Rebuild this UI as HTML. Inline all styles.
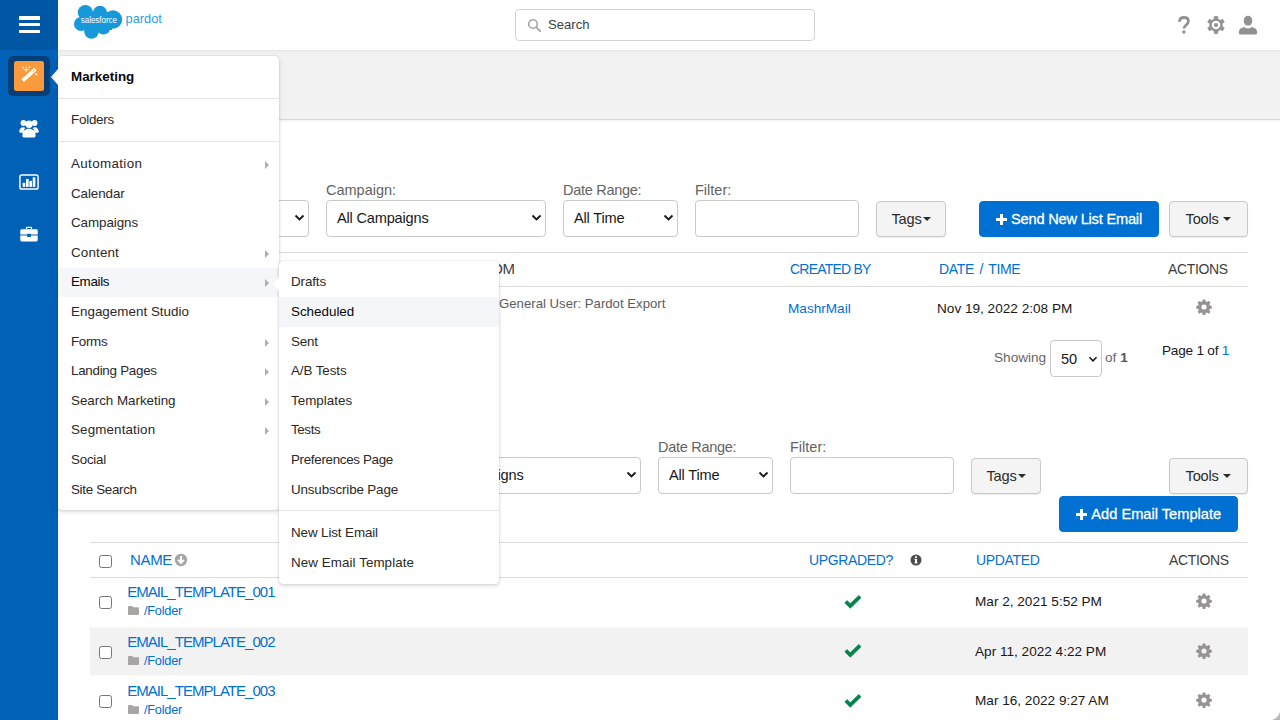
<!DOCTYPE html>
<html>
<head>
<meta charset="utf-8">
<title>Pardot - Emails</title>
<style>
*{box-sizing:border-box;margin:0;padding:0}
html,body{width:1280px;height:720px;overflow:hidden;background:#fff;font-family:"Liberation Sans",sans-serif;color:#181818}
.abs{position:absolute}
#side{position:absolute;left:0;top:0;width:58px;height:720px;background:#0061b6}
#sidetop{position:absolute;left:0;top:0;width:58px;height:50px;background:#0058a5}
.hb{position:absolute;left:19px;width:21px;height:3.5px;background:#fff;border-radius:.5px}
#topbar{position:absolute;left:58px;top:0;width:1222px;height:50px;background:#fff}
#band{position:absolute;left:58px;top:50px;width:1222px;height:70px;background:linear-gradient(#e4e3e3 0,#eeeded 1.500px,#f3f2f2 4px);border-bottom:1px solid #d9d8d8;box-shadow:0 1px 2px rgba(0,0,0,.07)}
#search{position:absolute;left:515px;top:9px;width:300px;height:32px;border:1px solid #d4d4d4;border-radius:4px;background:#fff}
#search span{position:absolute;left:32px;top:7px;font-size:13.1px;color:#3e3e3c}
.lbl{position:absolute;font-size:14.5px;color:#636363;white-space:nowrap;letter-spacing:0;margin-top:1px}
.sel{position:absolute;height:37px;border:1px solid #c9c9c9;border-radius:4px;background:#fff;font-size:14.6px;color:#181818;line-height:34px;padding-left:10px;white-space:nowrap;letter-spacing:-.2px}
.sel svg{position:absolute;right:3.300px;top:12.800px}
.inp{position:absolute;height:37px;border:1px solid #c9c9c9;border-radius:4px;background:#fff}
.btn{position:absolute;height:36px;border:1px solid #c9c9c9;border-radius:4px;background:#f4f4f4;font-size:14.6px;color:#2b2b2b;line-height:34px;text-align:center;white-space:nowrap;box-shadow:0 1px 1px rgba(0,0,0,.08);letter-spacing:-.2px}
.btn.blue{background:#0070d2;border-color:#0070d2;color:#fff;box-shadow:none;-webkit-text-stroke:.3px #fff;letter-spacing:.02px}
.caret{display:inline-block;width:0;height:0;border-left:4px solid transparent;border-right:4px solid transparent;border-top:4px solid #2b2b2b;vertical-align:middle;margin-left:1px;position:relative;top:-1px}
.hline{position:absolute;left:90px;width:1158px;height:1px;background:#dddbda}
.th{position:absolute;font-size:14px;color:#0070d2;white-space:nowrap;letter-spacing:-.35px}
.th.dk{color:#3e3e3c}
.td{position:absolute;font-size:13.6px;color:#181818;white-space:nowrap;letter-spacing:0;margin-top:1px}
.lnk{color:#0070d2}
.r1{font-size:15px !important;letter-spacing:-.97px !important;margin-top:0 !important}
.r2{font-size:12.8px !important;letter-spacing:-.25px !important;margin-top:.5px !important}
.rowbg{position:absolute;left:90px;width:1158px;background:#f3f2f2}
.cb{position:absolute;margin-top:1px;left:99px;width:13px;height:13px;border:1px solid #767676;border-radius:2.5px;background:#fff}
.gear{position:absolute;width:16px;height:16px}
.menu{position:absolute;background:#fff;border-radius:4px;box-shadow:0 2px 4px rgba(0,0,0,.14),0 0 1.500px rgba(0,0,0,.22)}
.mi{position:absolute;left:0;width:100%;height:30px;font-size:13.4px;color:#2b2826;line-height:30px;padding-left:13px;padding-top:1px;white-space:nowrap}
.mi.hl{background:#f4f6f9;color:#080707}
.mi i{position:absolute;right:10px;top:12.500px;width:0;height:0;border-top:4px solid transparent;border-bottom:4px solid transparent;border-left:4px solid #b0adab}
.mdiv{position:absolute;left:0;width:100%;height:1px;background:#e5e5e5}
</style>
</head>
<body>
<!-- top bar -->
<div id="topbar"></div>
<div id="band"></div>
<div id="search">
<svg class="abs" style="left:11px;top:8px" width="15" height="15" viewBox="0 0 15 15"><circle cx="6" cy="6" r="4.3" fill="none" stroke="#a5a5a5" stroke-width="1.6"/><path d="M9.2 9.2 L13.2 13.2" stroke="#a5a5a5" stroke-width="1.8" stroke-linecap="round"/></svg>
<span>Search</span></div>

<!-- logo -->
<svg class="abs" style="left:70px;top:0" width="100" height="44" viewBox="0 0 100 44">
<g fill="#1798d9">
<circle cx="15.300" cy="12.600" r="7.600"/><circle cx="30" cy="12.800" r="7"/><circle cx="43" cy="19.500" r="9.200"/>
<circle cx="11" cy="24" r="7"/><circle cx="21.500" cy="31.500" r="7.300"/><circle cx="33.500" cy="27.500" r="7"/>
<rect x="12" y="12" width="30" height="18"/>
</g>
<text x="10.800" y="22.600" style="font-family:'Liberation Sans',sans-serif" font-size="8.400" fill="#fff" textLength="36.200" lengthAdjust="spacingAndGlyphs">salesforce</text>
<text x="55.600" y="23" style="font-family:'Liberation Sans',sans-serif" font-size="13.500" fill="#2a9fdc" textLength="36.200" lengthAdjust="spacingAndGlyphs">pardot</text>
</svg>

<!-- top-right icons -->
<svg class="abs" style="left:1176px;top:14px" width="16" height="22" viewBox="0 0 16 22"><path d="M3.500 7.800C3.500 5 5.500 3.500 8 3.500c2.600 0 4.400 1.500 4.400 3.700 0 1.900-1.100 2.800-2.300 3.800-1.300 1.100-2.100 1.900-2.100 3.600" fill="none" stroke="#919191" stroke-width="2.800" stroke-linecap="butt"/><rect x="6.400" y="16.500" width="3" height="3" fill="#919191"/></svg>
<svg class="abs" style="left:1206px;top:15px" width="20" height="20" viewBox="0 0 20 20"><path fill="#919191" fill-rule="evenodd" stroke="#919191" stroke-width=".8" stroke-linejoin="round" d="M8.18 3.97 L8.37 1.45 L11.63 1.45 L11.82 3.97 L14.31 5.41 L16.59 4.32 L18.22 7.14 L16.13 8.56 L16.13 11.44 L18.22 12.86 L16.59 15.68 L14.31 14.59 L11.82 16.03 L11.63 18.55 L8.37 18.55 L8.18 16.03 L5.69 14.59 L3.41 15.68 L1.78 12.86 L3.87 11.44 L3.87 8.56 L1.78 7.14 L3.41 4.32 L5.69 5.41Z M10 5.400a4.600 4.600 0 100 9.200 4.600 4.600 0 000-9.200z"/><circle cx="10" cy="10" r="2.100" fill="#919191"/></svg>
<svg class="abs" style="left:1238px;top:15px" width="20" height="20" viewBox="0 0 20 20"><ellipse cx="10" cy="5.700" rx="4.300" ry="4.900" fill="#919191"/><path fill="#919191" d="M1 18.5v-2.2c0-2.2 2.6-3.5 5.2-4.3 1 .9 2.3 1.4 3.8 1.4s2.800-.5 3.800-1.400c2.600.800 5.200 2.100 5.200 4.300v2.200c0 .5-.4.900-.9.900H1.900c-.5 0-.9-.4-.9-.9z"/></svg>

<!-- SECTION 1 -->
<div class="sel" style="left:90px;top:200px;width:219px">All Types<svg width="11" height="8" viewBox="0 0 11 8"><path d="M1.5 1.5 L5.500 5.500 L9.500 1.500" fill="none" stroke="#181818" stroke-width="1.800"/></svg></div>
<div class="lbl" style="left:326px;top:181px">Campaign:</div>
<div class="sel" style="left:326px;top:200px;width:220px">All Campaigns<svg width="11" height="8" viewBox="0 0 11 8"><path d="M1.5 1.5 L5.500 5.500 L9.500 1.500" fill="none" stroke="#181818" stroke-width="1.800"/></svg></div>
<div class="lbl" style="left:563px;top:181px;letter-spacing:-.28px">Date Range:</div>
<div class="sel" style="left:563px;top:200px;width:115px">All Time<svg width="11" height="8" viewBox="0 0 11 8"><path d="M1.5 1.5 L5.500 5.500 L9.500 1.500" fill="none" stroke="#181818" stroke-width="1.800"/></svg></div>
<div class="lbl" style="left:695px;top:181px">Filter:</div>
<div class="inp" style="left:695px;top:200px;width:164px"></div>
<div class="btn" style="left:876px;top:201px;width:70px">Tags<span class="caret"></span></div>
<div class="btn blue" style="left:979px;top:201px;width:180px;letter-spacing:-.2px;padding-right:.5px"><svg width="11" height="11" viewBox="0 0 11 11" style="position:relative;top:.5px;margin-right:4.500px"><path d="M4 0h3v4h4v3H7v4H4V7H0V4h4z" fill="#fff"/></svg>Send New List Email</div>
<div class="btn" style="left:1169px;top:201px;width:79px">Tools <span class="caret"></span></div>

<div class="hline" style="top:252px"></div>
<div class="th dk" style="left:472px;top:260px;font-size:15px">FROM</div>
<div class="th" style="left:790px;top:261px;letter-spacing:-.78px">CREATED BY</div>
<div class="th" style="left:939px;top:261px;word-spacing:2px">DATE / TIME</div>
<div class="th dk" style="left:1168px;top:261px">ACTIONS</div>
<div class="hline" style="top:286px"></div>
<div class="td" style="left:499px;top:295px;color:#5c5c5c;font-size:13.2px">General User: Pardot Export</div>
<div class="td lnk" style="left:788px;top:300px">MashrMail</div>
<div class="td" style="left:937px;top:300px">Nov 19, 2022 2:08 PM</div>
<svg class="gear" style="left:1196px;top:299.300px" viewBox="0 0 16 16"><use href="#g"/></svg>

<div class="td" style="left:994px;top:349px;color:#666">Showing</div>
<div class="sel" style="left:1050px;top:340px;width:52px;height:37px;padding-left:10px;line-height:36px">50<svg style="right:3.500px;top:15px" width="10" height="7" viewBox="0 0 11 8"><path d="M1.5 1.5 L5.500 5.500 L9.500 1.500" fill="none" stroke="#181818" stroke-width="1.800"/></svg></div>
<div class="td" style="left:1105px;top:349px;color:#666">of <b style="color:#555">1</b></div>
<div class="td" style="left:1162px;top:342px;letter-spacing:-.22px">Page 1 of <span class="lnk">1</span></div>

<!-- SECTION 2 -->
<div class="sel" style="left:421px;top:457px;width:220px">All Campaigns<svg width="11" height="8" viewBox="0 0 11 8"><path d="M1.5 1.5 L5.500 5.500 L9.500 1.500" fill="none" stroke="#181818" stroke-width="1.800"/></svg></div>
<div class="lbl" style="left:658px;top:438px;letter-spacing:-.28px">Date Range:</div>
<div class="sel" style="left:658px;top:457px;width:115px">All Time<svg width="11" height="8" viewBox="0 0 11 8"><path d="M1.5 1.5 L5.500 5.500 L9.500 1.500" fill="none" stroke="#181818" stroke-width="1.800"/></svg></div>
<div class="lbl" style="left:790px;top:438px">Filter:</div>
<div class="inp" style="left:790px;top:457px;width:164px"></div>
<div class="btn" style="left:971px;top:458px;width:70px">Tags<span class="caret"></span></div>
<div class="btn" style="left:1169px;top:458px;width:79px">Tools <span class="caret"></span></div>
<div class="btn blue" style="left:1059px;top:496px;width:179px"><svg width="11" height="11" viewBox="0 0 11 11" style="position:relative;top:.5px;margin-right:4.500px"><path d="M4 0h3v4h4v3H7v4H4V7H0V4h4z" fill="#fff"/></svg>Add Email Template</div>

<div class="hline" style="top:542px"></div>
<div class="cb" style="top:554px"></div>
<div class="th" style="left:130px;top:551px;font-size:15px">NAME</div>
<svg class="abs" style="left:174px;top:553px" width="14" height="14" viewBox="0 0 14 14"><circle cx="7" cy="7" r="6.2" fill="#a8a6a4"/><path d="M7 3v6.500M4 6.800l3 3 3-3" fill="none" stroke="#fff" stroke-width="1.900"/></svg>
<div class="th" style="left:809px;top:552px">UPGRADED?</div>
<svg class="abs" style="left:910px;top:554px" width="12" height="12" viewBox="0 0 12 12"><circle cx="6" cy="6" r="5.500" fill="#4a4a4a"/><rect x="5" y="5" width="2" height="4.300" fill="#fff"/><rect x="4.300" y="8.300" width="3.400" height="1" fill="#fff"/><rect x="4.300" y="4.800" width="2" height="1" fill="#fff"/><circle cx="6" cy="3.100" r="1.100" fill="#fff"/></svg>
<div class="th" style="left:976px;top:552px">UPDATED</div>
<div class="th dk" style="left:1169px;top:552px">ACTIONS</div>
<div class="hline" style="top:577px"></div>

<div class="rowbg" style="top:627px;height:49px;background:linear-gradient(#f9f8f8 0 1px,#f3f2f2 1px 48px,#f9f8f8 48px)"></div>

<div class="cb" style="top:595px"></div>
<div class="td lnk r1" style="left:127.200px;top:583px">EMAIL_TEMPLATE_001</div>
<svg class="abs fold" style="left:127.700px;top:605.500px" width="11" height="9" viewBox="0 0 12 10" preserveAspectRatio="none"><use href="#f"/></svg>
<div class="td lnk r2" style="left:144px;top:602px">/Folder</div>
<svg class="abs" style="left:844px;top:594.600px" width="18" height="14" viewBox="0 0 18 14"><use href="#c"/></svg>
<div class="td" style="left:975px;top:593px">Mar 2, 2021 5:52 PM</div>
<svg class="gear" style="left:1196px;top:593px" viewBox="0 0 16 16"><use href="#g"/></svg>

<div class="cb" style="top:645px"></div>
<div class="td lnk r1" style="left:127.200px;top:633px">EMAIL_TEMPLATE_002</div>
<svg class="abs fold" style="left:127.700px;top:655.500px" width="11" height="9" viewBox="0 0 12 10" preserveAspectRatio="none"><use href="#f"/></svg>
<div class="td lnk r2" style="left:144px;top:652px">/Folder</div>
<svg class="abs" style="left:844px;top:643.600px" width="18" height="14" viewBox="0 0 18 14"><use href="#c"/></svg>
<div class="td" style="left:975px;top:643px">Apr 11, 2022 4:22 PM</div>
<svg class="gear" style="left:1196px;top:642.500px" viewBox="0 0 16 16"><use href="#g"/></svg>

<div class="cb" style="top:694px"></div>
<div class="td lnk r1" style="left:127.200px;top:682px">EMAIL_TEMPLATE_003</div>
<svg class="abs fold" style="left:127.700px;top:704.500px" width="11" height="9" viewBox="0 0 12 10" preserveAspectRatio="none"><use href="#f"/></svg>
<div class="td lnk r2" style="left:144px;top:701px">/Folder</div>
<svg class="abs" style="left:844px;top:693.600px" width="18" height="14" viewBox="0 0 18 14"><use href="#c"/></svg>
<div class="td" style="left:975px;top:692px">Mar 16, 2022 9:27 AM</div>
<svg class="gear" style="left:1196px;top:691.500px" viewBox="0 0 16 16"><use href="#g"/></svg>

<svg width="0" height="0" style="position:absolute"><defs>
<path id="f" fill="#a8a6a4" d="M1 0h3.600l1.200 1.400H11a1 1 0 011 1V9a1 1 0 01-1 1H1a1 1 0 01-1-1V1a1 1 0 011-1z"/>
<path id="c" fill="#04844b" stroke="#04844b" stroke-width=".8" stroke-linejoin="round" d="M6.300 13.200L0.900 7.800l2.200-2.200 3.200 3.200L14.800 0.500l2.200 2.200z"/>
<path id="g" fill="#969492" fill-rule="evenodd" d="M6.700 0.500h2.600l.4 2 1.200.5 1.700-1.200 1.800 1.900-1.100 1.700.5 1.200 2 .4v2.600l-2 .4-.5 1.200 1.200 1.700-1.900 1.800-1.700-1.100-1.200.5-.4 2H6.700l-.4-2-1.200-.5-1.700 1.200-1.800-1.900 1.100-1.700-.5-1.200-2-.4V7l2-.4.500-1.200L1.500 3.700l1.900-1.800 1.700 1.100 1.200-.5zM8 5.400a2.600 2.600 0 100 5.200 2.600 2.600 0 000-5.200z"/>
</defs></svg>

<div class="abs" style="right:0;bottom:0;width:10px;height:10px;background:radial-gradient(circle at 0 0,rgba(0,0,0,0) 9.500px,#b5b5b5 10.500px)"></div>
<!-- sidebar -->
<div id="side"></div>
<div id="sidetop"></div>
<div class="hb" style="top:16px"></div><div class="hb" style="top:22.7px"></div><div class="hb" style="top:29.5px"></div>

<!-- marketing active icon -->
<div class="abs" style="left:8px;top:56px;width:42px;height:40px;border-radius:5px;background:#063f78"></div>
<div class="abs" style="left:14px;top:61px;width:30px;height:30px;border-radius:2.5px;background:#f99a3d"></div>
<svg class="abs" style="left:14px;top:61px" width="30" height="30" viewBox="0 0 30 30">
<path d="M8.700 19.700 L21.400 8.200" stroke="#fff" stroke-width="3.700" stroke-linecap="butt"/>
<path d="M18.900 10.600l1.800-1.600" stroke="#f99a3d" stroke-width=".9" stroke-linecap="round"/>
<path d="M12.200 6.300v4.600M9.900 8.600h4.600" stroke="#fff" stroke-width=".9"/>
<path d="M9 5.600v2.200M7.900 6.700h2.200M15.300 5.100v2M14.300 6.100h2M22.300 12v2.400M21.100 13.200h2.400" stroke="#fff" stroke-width=".7"/>
</svg>
<!-- people icon -->
<svg class="abs" style="left:19px;top:119px" width="20" height="19" viewBox="0 0 22 20" preserveAspectRatio="none">
<g fill="#fff"><circle cx="4.800" cy="4.200" r="3.100"/><circle cx="17.200" cy="4.200" r="3.100"/>
<path d="M0.300 13.500c0-3 1.800-4.800 4.200-4.800 1 0 1.800.3 2.500.9-1.400 1.300-2 3-2 4.900H1.200c-.5 0-.9-.4-.9-1zM21.700 13.500c0-3-1.800-4.800-4.200-4.800-1 0-1.800.3-2.500.9 1.400 1.300 2 3 2 4.900h3.800c.5 0 .9-.4.900-1z"/>
<circle cx="11" cy="5.600" r="4"/>
<path d="M3.800 16.700c0-4 3-6.500 7.200-6.500s7.200 2.500 7.200 6.500v1.300c0 .8-.6 1.400-1.400 1.400H5.200c-.8 0-1.400-.6-1.400-1.400z"/></g></svg>
<!-- chart icon -->
<svg class="abs" style="left:19px;top:173.500px" width="20" height="16" viewBox="0 0 22 17" preserveAspectRatio="none">
<rect x="1" y="1" width="20" height="15" rx="2" fill="none" stroke="#fff" stroke-width="1.600"/>
<g fill="#fff"><rect x="4" y="9.300" width="2.900" height="4.400"/><rect x="7.700" y="5.300" width="2.900" height="8.400"/><rect x="11.400" y="7.300" width="2.900" height="6.400"/><rect x="15.100" y="3.600" width="2.900" height="10.100"/></g></svg>
<!-- briefcase icon -->
<svg class="abs" style="left:20px;top:225.500px" width="18" height="16" viewBox="0 0 20 17" preserveAspectRatio="none">
<g fill="#fff"><path d="M6.500 3.500V2.200C6.500 1.300 7.200.7 8 .7h4c.8 0 1.500.6 1.500 1.500v1.300h-1.400V2.300c0-.2-.1-.3-.3-.3H8.200c-.2 0-.3.100-.3.300v1.200z"/>
<path d="M1.800 3.500h16.400c.8 0 1.500.700 1.500 1.500v4H12v-.8H8V9H.3V5c0-.8.700-1.500 1.500-1.500z"/>
<path d="M.300 10.200H8v1.600h4v-1.600h7.700v4.800c0 .8-.7 1.500-1.500 1.500H1.800c-.8 0-1.500-.7-1.500-1.500z"/></g></svg>

<!-- Marketing menu -->
<div class="menu" style="left:58px;top:56px;width:221px;height:454px">
<div class="abs" style="left:-7px;top:13px;width:0;height:0;border-top:8px solid transparent;border-bottom:8px solid transparent;border-right:7px solid #fff"></div>
<div class="mi" style="top:5px;font-weight:700;color:#080707;font-size:13.4px;letter-spacing:0.000px">Marketing</div>
<div class="mdiv" style="top:42px"></div>
<div class="mi" style="top:48px;letter-spacing:-0.237px">Folders</div>
<div class="mdiv" style="top:85px"></div>
<div class="mi" style="top:92px;letter-spacing:0.350px">Automation<i></i></div>
<div class="mi" style="top:122px;letter-spacing:-0.074px">Calendar</div>
<div class="mi" style="top:151px;letter-spacing:-0.082px">Campaigns</div>
<div class="mi" style="top:181px;letter-spacing:0.156px">Content<i></i></div>
<div class="mi hl" style="top:212px;height:29px;line-height:26px;letter-spacing:-0.323px">Emails<i style="top:10.500px"></i></div>
<div class="mi" style="top:240px;letter-spacing:0.021px">Engagement Studio</div>
<div class="mi" style="top:270px;letter-spacing:-0.338px">Forms<i></i></div>
<div class="mi" style="top:299px;letter-spacing:-0.278px">Landing Pages<i></i></div>
<div class="mi" style="top:329px;letter-spacing:-0.028px">Search Marketing<i></i></div>
<div class="mi" style="top:358px;letter-spacing:0.134px">Segmentation<i></i></div>
<div class="mi" style="top:388px;letter-spacing:-0.247px">Social</div>
<div class="mi" style="top:418px;letter-spacing:-0.317px">Site Search</div>
</div>

<!-- Emails submenu -->
<div class="menu" style="left:279px;top:261px;width:220px;height:323px">
<div class="abs" style="left:-6px;top:15.500px;width:0;height:0;border-top:7px solid transparent;border-bottom:7px solid transparent;border-right:6px solid #fff"></div>
<div class="mi" style="top:5px;padding-left:12px;letter-spacing:-0.120px">Drafts</div>
<div class="mi hl" style="top:36px;height:30px;line-height:28px;padding-left:12px;letter-spacing:-0.005px">Scheduled</div>
<div class="mi" style="top:65px;padding-left:12px;letter-spacing:-0.199px">Sent</div>
<div class="mi" style="top:94px;padding-left:12px;letter-spacing:-0.092px">A/B Tests</div>
<div class="mi" style="top:124px;padding-left:12px;letter-spacing:0.024px">Templates</div>
<div class="mi" style="top:153px;padding-left:12px;letter-spacing:-0.403px">Tests</div>
<div class="mi" style="top:183px;padding-left:12px;letter-spacing:-0.325px">Preferences Page</div>
<div class="mi" style="top:213px;padding-left:12px;letter-spacing:-0.151px">Unsubscribe Page</div>
<div class="mdiv" style="top:249px"></div>
<div class="mi" style="top:256px;padding-left:12px;letter-spacing:-0.112px">New List Email</div>
<div class="mi" style="top:286px;padding-left:12px;letter-spacing:0.066px">New Email Template</div>
</div>

</body>
</html>
